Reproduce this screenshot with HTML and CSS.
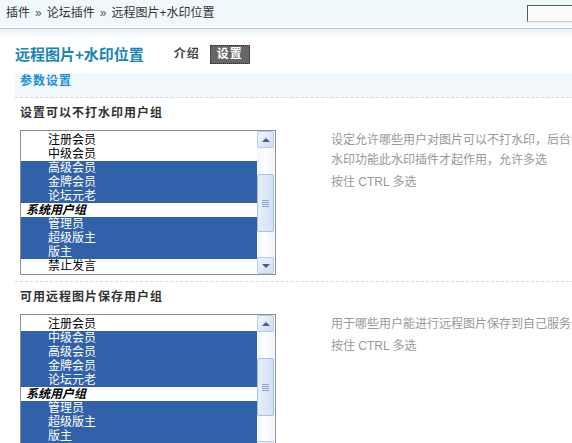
FILE: index.html
```html
<!DOCTYPE html>
<html lang="zh-CN">
<head>
<meta charset="utf-8">
<title>远程图片+水印位置</title>
<link rel="stylesheet" href="styles.css">
</head>
<body>
<div class="page">
  <div class="topbar">
    <div class="crumb">插件<span class="sep">»</span>论坛插件<span class="sep">»</span>远程图片+水印位置</div>
    <div class="search"></div>
  </div>
  <div class="rule"></div>
  <div class="titlebar">
    <h1 class="title">远程图片+水印位置</h1>
    <nav class="tabs">
      <span class="tab">介绍</span>
      <span class="tab active">设置</span>
    </nav>
  </div>
  <div class="panel">
    <div class="panel-head">参数设置</div>

    <div class="setting">
      <h3 class="setting-title">设置可以不打水印用户组</h3>
      <div class="setting-body">
        <div class="listbox">
          <ul class="options">
            <li class="opt">注册会员</li>
            <li class="opt">中级会员</li>
            <li class="opt sel">高级会员</li>
            <li class="opt sel">金牌会员</li>
            <li class="opt sel">论坛元老</li>
            <li class="group">系统用户组</li>
            <li class="opt sel">管理员</li>
            <li class="opt sel">超级版主</li>
            <li class="opt sel">版主</li>
            <li class="opt">禁止发言</li>
          </ul>
          <div class="scrollbar">
            <div class="sb-btn up"><span class="arrow"></span></div>
            <div class="sb-track"><div class="sb-thumb"><span class="grip"></span></div></div>
            <div class="sb-btn down"><span class="arrow"></span></div>
          </div>
        </div>
        <div class="desc">
          <p class="desc-text">设定允许哪些用户对图片可以不打水印，后台开启水印功能此水印插件才起作用，允许多选</p>
          <p class="desc-note">按住 CTRL 多选</p>
        </div>
      </div>
    </div>

    <div class="setting">
      <h3 class="setting-title">可用远程图片保存用户组</h3>
      <div class="setting-body">
        <div class="listbox">
          <ul class="options">
            <li class="opt">注册会员</li>
            <li class="opt sel">中级会员</li>
            <li class="opt sel">高级会员</li>
            <li class="opt sel">金牌会员</li>
            <li class="opt sel">论坛元老</li>
            <li class="group">系统用户组</li>
            <li class="opt sel">管理员</li>
            <li class="opt sel">超级版主</li>
            <li class="opt sel">版主</li>
            <li class="opt">禁止发言</li>
          </ul>
          <div class="scrollbar">
            <div class="sb-btn up"><span class="arrow"></span></div>
            <div class="sb-track"><div class="sb-thumb"><span class="grip"></span></div></div>
            <div class="sb-btn down"><span class="arrow"></span></div>
          </div>
        </div>
        <div class="desc">
          <p class="desc-text">用于哪些用户能进行远程图片保存到自己服务器</p>
          <p class="desc-note">按住 CTRL 多选</p>
        </div>
      </div>
    </div>
  </div>
</div>
</body>
</html>
```
FILE: styles.css
```css
html, body {
  margin: 0;
  padding: 0;
  background: #fff;
  overflow: hidden;
}
body {
  font-family: "Liberation Sans", "Noto Sans CJK SC", sans-serif;
  font-size: 12px;
  color: #333;
}
.page {
  width: 900px;
}
.topbar {
  display: flex;
  align-items: center;
  height: 26px;
  background: #f1f8fb;
}
.crumb {
  width: 527px;
  padding-left: 6px;
  box-sizing: border-box;
  line-height: 16px;
  color: #333;
}
.sep {
  margin: 0 5px;
  color: #555;
}
.search {
  width: 80px;
  height: 17px;
  box-sizing: border-box;
  border: 1px solid #c8c8c8;
  border-top-color: #5a5a5a;
  border-left-color: #5a5a5a;
  background: #fbfbfb;
}
.rule {
  margin-top: 2px;
  height: 9px;
  border-top: 1px solid #b6ccd7;
  background: linear-gradient(#e4f0f6, #ffffff);
}
.titlebar {
  display: flex;
  align-items: center;
  height: 21px;
  margin-top: 6px;
  padding-left: 15px;
}
.title {
  margin: 0;
  font-size: 15px;
  font-weight: bold;
  line-height: 21px;
  color: #1786b6;
}
.tabs {
  display: flex;
  gap: 3px;
  margin-left: 23px;
}
.tab {
  padding: 0 6px;
  line-height: 17px;
  border: 1px dotted transparent;
  font-weight: bold;
  letter-spacing: 1px;
  color: #444;
}
.tab.active {
  background: #666;
  border-color: #2a2a2a;
  color: #fff;
}
.panel {
  margin-top: 8px;
  margin-left: 15px;
}
.panel-head {
  height: 24px;
  box-sizing: border-box;
  padding-left: 5px;
  line-height: 16px;
  background: #f2f8fc;
  border-bottom: 1px dashed #d3dbe0;
  height: 25px;
  font-weight: bold;
  letter-spacing: 1px;
  color: #1b8fcf;
}
.setting {
  padding: 7px 0 6px 5px;
  border-top: 1px dashed #d3dbe0;
}
.panel-head + .setting {
  border-top: 0;
}
.setting-title {
  margin: 0 0 9px;
  font-size: 12px;
  line-height: 16px;
  font-weight: bold;
  letter-spacing: 1px;
  color: #333;
}
.setting-body {
  display: flex;
  align-items: flex-start;
}
.listbox {
  display: flex;
  width: 256px;
  height: 145px;
  box-sizing: border-box;
  border: 1px solid #8f8f8f;
  background: #fff;
  overflow: hidden;
}
.options {
  flex: 1;
  margin: 0;
  padding: 2px 0 0;
  list-style: none;
  overflow: hidden;
}
.opt, .group {
  height: 14px;
  line-height: 14px;
  white-space: nowrap;
  color: #000;
}
.opt {
  padding-left: 27px;
}
.opt.sel {
  background: #3161a9;
  color: #fff;
}
.group {
  padding-left: 5px;
  font-weight: bold;
  font-style: italic;
}
.scrollbar {
  display: flex;
  flex-direction: column;
  width: 17px;
  margin-right: 1px;
  background: linear-gradient(90deg, #f3f6fc, #fdfeff 50%, #eef3fb);
}
.sb-btn {
  display: flex;
  align-items: center;
  justify-content: center;
  height: 17px;
  box-sizing: border-box;
  border: 1px solid #b9c9e6;
  border-radius: 2px;
  background: linear-gradient(135deg, #f1f5fe, #cfdcf5);
}
.arrow {
  width: 0;
  height: 0;
  border-left: 4px solid transparent;
  border-right: 4px solid transparent;
}
.up .arrow {
  border-bottom: 4px solid #4b5d80;
}
.down .arrow {
  border-top: 4px solid #4b5d80;
}
.sb-track {
  flex: 1;
  padding-top: 26px;
}
.sb-thumb {
  display: flex;
  align-items: center;
  justify-content: center;
  height: 58px;
  box-sizing: border-box;
  border: 1px solid #a8bde3;
  border-radius: 2px;
  background: linear-gradient(90deg, #e8effd, #d3e0f8);
}
.grip {
  width: 7px;
  height: 7px;
  background: repeating-linear-gradient(#8fa4c9 0 1px, transparent 1px 2px);
}
.desc {
  margin-left: 55px;
  width: 264px;
  color: #999;
}
.desc-text {
  margin: 0;
  line-height: 20px;
}
.desc-note {
  margin: 2px 0 0;
  line-height: 20px;
}
```
